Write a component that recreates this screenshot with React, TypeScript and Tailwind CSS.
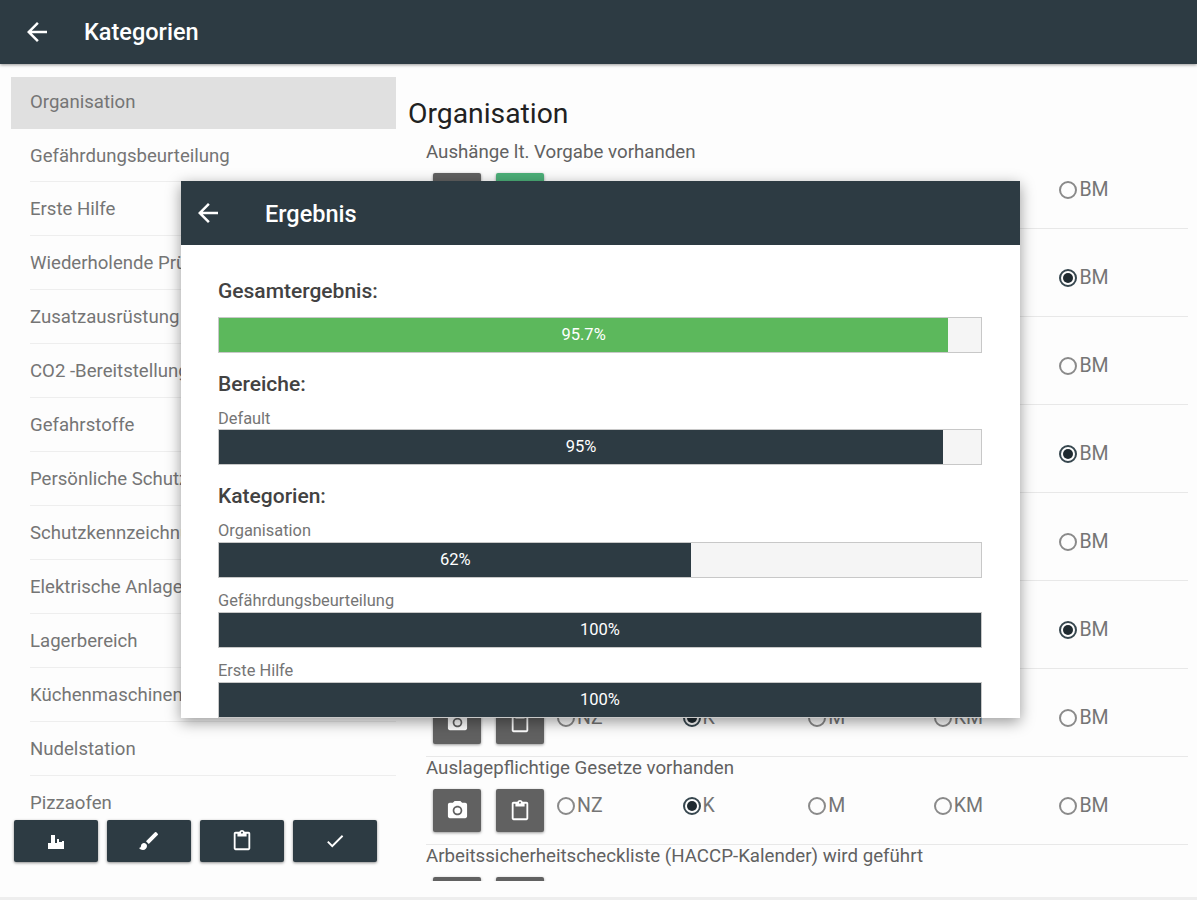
import React from 'react';
import { MdArrowBack, MdPhotoCamera, MdContentPaste, MdBrush, MdCheck } from 'react-icons/md';

const categories = [
  'Organisation',
  'Gefährdungsbeurteilung',
  'Erste Hilfe',
  'Wiederholende Prüfungen',
  'Zusatzausrüstung',
  'CO2 -Bereitstellung',
  'Gefahrstoffe',
  'Persönliche Schutzausrüstung',
  'Schutzkennzeichnung',
  'Elektrische Anlagen',
  'Lagerbereich',
  'Küchenmaschinen',
  'Nudelstation',
  'Pizzaofen',
];

const questions = [
  { label: 'Aushänge lt. Vorgabe vorhanden', value: 'K', green: true },
  { label: '', value: 'BM' },
  { label: '', value: 'K' },
  { label: '', value: 'BM' },
  { label: '', value: 'K' },
  { label: '', value: 'BM' },
  { label: '', value: 'K' },
  { label: 'Auslagepflichtige Gesetze vorhanden', value: 'K' },
  { label: 'Arbeitssicherheitscheckliste (HACCP-Kalender) wird geführt', value: 'K' },
];

const options = ['NZ', 'K', 'M', 'KM', 'BM'];

function Radio({ label, checked }: { label: string; checked: boolean }) {
  return (
    <div className="flex items-center gap-[2px] text-[19.5px] leading-none text-[#757575]">
      <span
        className={`flex h-[18px] w-[18px] items-center justify-center rounded-full border-2 ${
          checked ? 'border-[#37474f]' : 'border-[#8a8a8a]'
        }`}
      >
        {checked && <span className="h-[10px] w-[10px] rounded-full bg-[#1f2a30]" />}
      </span>
      {label}
    </div>
  );
}

function Bar({ value, label, color = 'bg-[#2d3b43]' }: { value: number; label: string; color?: string }) {
  return (
    <div className="h-[36px] w-full shrink-0 border border-[#c8c8c8] bg-[#f5f5f5]">
      <div
        className={`flex h-full items-center justify-center text-[16.5px] text-white ${color}`}
        style={{ width: `${value}%` }}
      >
        {label}
      </div>
    </div>
  );
}

function ToolButton({ children }: { children: React.ReactNode }) {
  return (
    <button className="flex h-[42px] w-[84px] items-center justify-center rounded-[2px] bg-[#2d3b43] text-[24px] text-white shadow-[0_1px_3px_rgba(0,0,0,0.45)]">
      {children}
    </button>
  );
}

function ChartIcon() {
  return (
    <svg width="24" height="24" viewBox="0 0 24 24" fill="currentColor">
      <path d="M4 20v-6h3V6h4v8h2v-4h2v3h3v-1h2v8z" />
    </svg>
  );
}

export default function App() {
  return (
    <div className="relative h-[900px] overflow-hidden bg-[#fdfdfd] font-['Roboto',sans-serif]">
      {/* App bar */}
      <header className="flex h-[64px] items-center bg-[#2d3b43] pl-[22px] text-white shadow-[0_1px_3px_rgba(0,0,0,0.4)]">
        <MdArrowBack className="text-[30px]" />
        <h1 className="ml-[32px] pt-[2px] text-[23.5px] font-medium">Kategorien</h1>
      </header>

      <div className="flex h-[836px] border-b-[3px] border-[#eeeeee]">
        {/* Category list */}
        <aside className="flex h-[817px] w-[396px] shrink-0 flex-col pl-[11px] pt-[13px]">
          <ul className="h-[738px] overflow-hidden">
            {categories.map((name, i) => (
              <li
                key={name}
                className={`flex items-center text-[18.6px] text-[#757575] ${
                  i === 0
                    ? 'h-[52px] bg-[#e0e0e0] pl-[19px]'
                    : i === 1
                      ? 'ml-[19px] h-[53px] border-b border-[#eeeeee] pt-[3px]'
                      : 'ml-[19px] h-[54px] border-b border-[#eeeeee] pt-[3px]'
                }`}
              >
                {name}
              </li>
            ))}
          </ul>
          <div className="mt-[5px] flex gap-[9px] pl-[3px]">
            <ToolButton>
              <ChartIcon />
            </ToolButton>
            <ToolButton>
              <MdBrush />
            </ToolButton>
            <ToolButton>
              <MdContentPaste className="text-[22px]" />
            </ToolButton>
            <ToolButton>
              <MdCheck className="text-[22px]" />
            </ToolButton>
          </div>
        </aside>

        {/* Questions */}
        <main className="h-[817px] flex-1 overflow-hidden pl-[12px] pr-[9px] pt-[33px]">
          <h2 className="h-[44px] text-[28.3px] leading-[34px] text-[#212121]">Organisation</h2>
          {questions.map((q, i) => (
            <section key={i} className="ml-[18px] h-[88px] border-b border-[#e8e8e8]">
              <p className="h-[32px] text-[18.7px] leading-[22px] text-[#616161]">{q.label}</p>
              <div className="flex items-center">
                <button className="ml-[7px] flex h-[43px] w-[48px] items-center justify-center rounded-[2px] bg-[#616161] text-[23px] text-white shadow-[0_1px_3px_rgba(0,0,0,0.4)]">
                  <MdPhotoCamera />
                </button>
                <button
                  className={`ml-[15px] flex h-[43px] w-[48px] items-center justify-center rounded-[2px] text-[22px] text-white shadow-[0_1px_3px_rgba(0,0,0,0.4)] ${
                    q.green ? 'bg-[#4caf78]' : 'bg-[#616161]'
                  }`}
                >
                  <MdContentPaste />
                </button>
                {/* the last row is cut off above its radios */}
                {i < questions.length - 1 && (
                  <div className="mb-[9px] ml-[13px] grid w-[628px] grid-cols-5">
                    {options.map((o) => (
                      <Radio key={o} label={o} checked={q.value === o} />
                    ))}
                  </div>
                )}
              </div>
            </section>
          ))}
        </main>
      </div>

      {/* Result dialog */}
      <div className="absolute left-[181px] top-[181px] flex h-[537px] w-[839px] flex-col overflow-hidden bg-white shadow-[0_4px_14px_rgba(0,0,0,0.4)]">
        <div className="flex h-[64px] shrink-0 items-center bg-[#2d3b43] pl-[12px] text-white">
          <MdArrowBack className="text-[30px]" />
          <h2 className="ml-[42px] pt-[4px] text-[23.5px] font-medium">Ergebnis</h2>
        </div>
        <div className="flex flex-col pl-[37px] pr-[38px]">
          <h3 className="mt-[33px] h-[39px] text-[21px] leading-[26px] font-medium text-[#424242]">Gesamtergebnis:</h3>
          <Bar value={95.7} label="95.7%" color="bg-[#5cb85c]" />
          <h3 className="mt-[18px] h-[26px] text-[21px] leading-[26px] font-medium text-[#424242]">Bereiche:</h3>
          <p className="mt-[12px] h-[20px] text-[16.4px] leading-[20px] text-[#757575]">Default</p>
          <Bar value={95} label="95%" />
          <h3 className="mt-[18px] h-[26px] text-[21px] leading-[26px] font-medium text-[#424242]">Kategorien:</h3>
          <p className="mt-[12px] h-[21px] text-[16.4px] leading-[20px] text-[#757575]">Organisation</p>
          <Bar value={62} label="62%" />
          <p className="mt-[13px] h-[21px] text-[16.4px] leading-[20px] text-[#757575]">Gefährdungsbeurteilung</p>
          <Bar value={100} label="100%" />
          <p className="mt-[13px] h-[21px] text-[16.4px] leading-[20px] text-[#757575]">Erste Hilfe</p>
          <Bar value={100} label="100%" />
        </div>
      </div>
    </div>
  );
}
